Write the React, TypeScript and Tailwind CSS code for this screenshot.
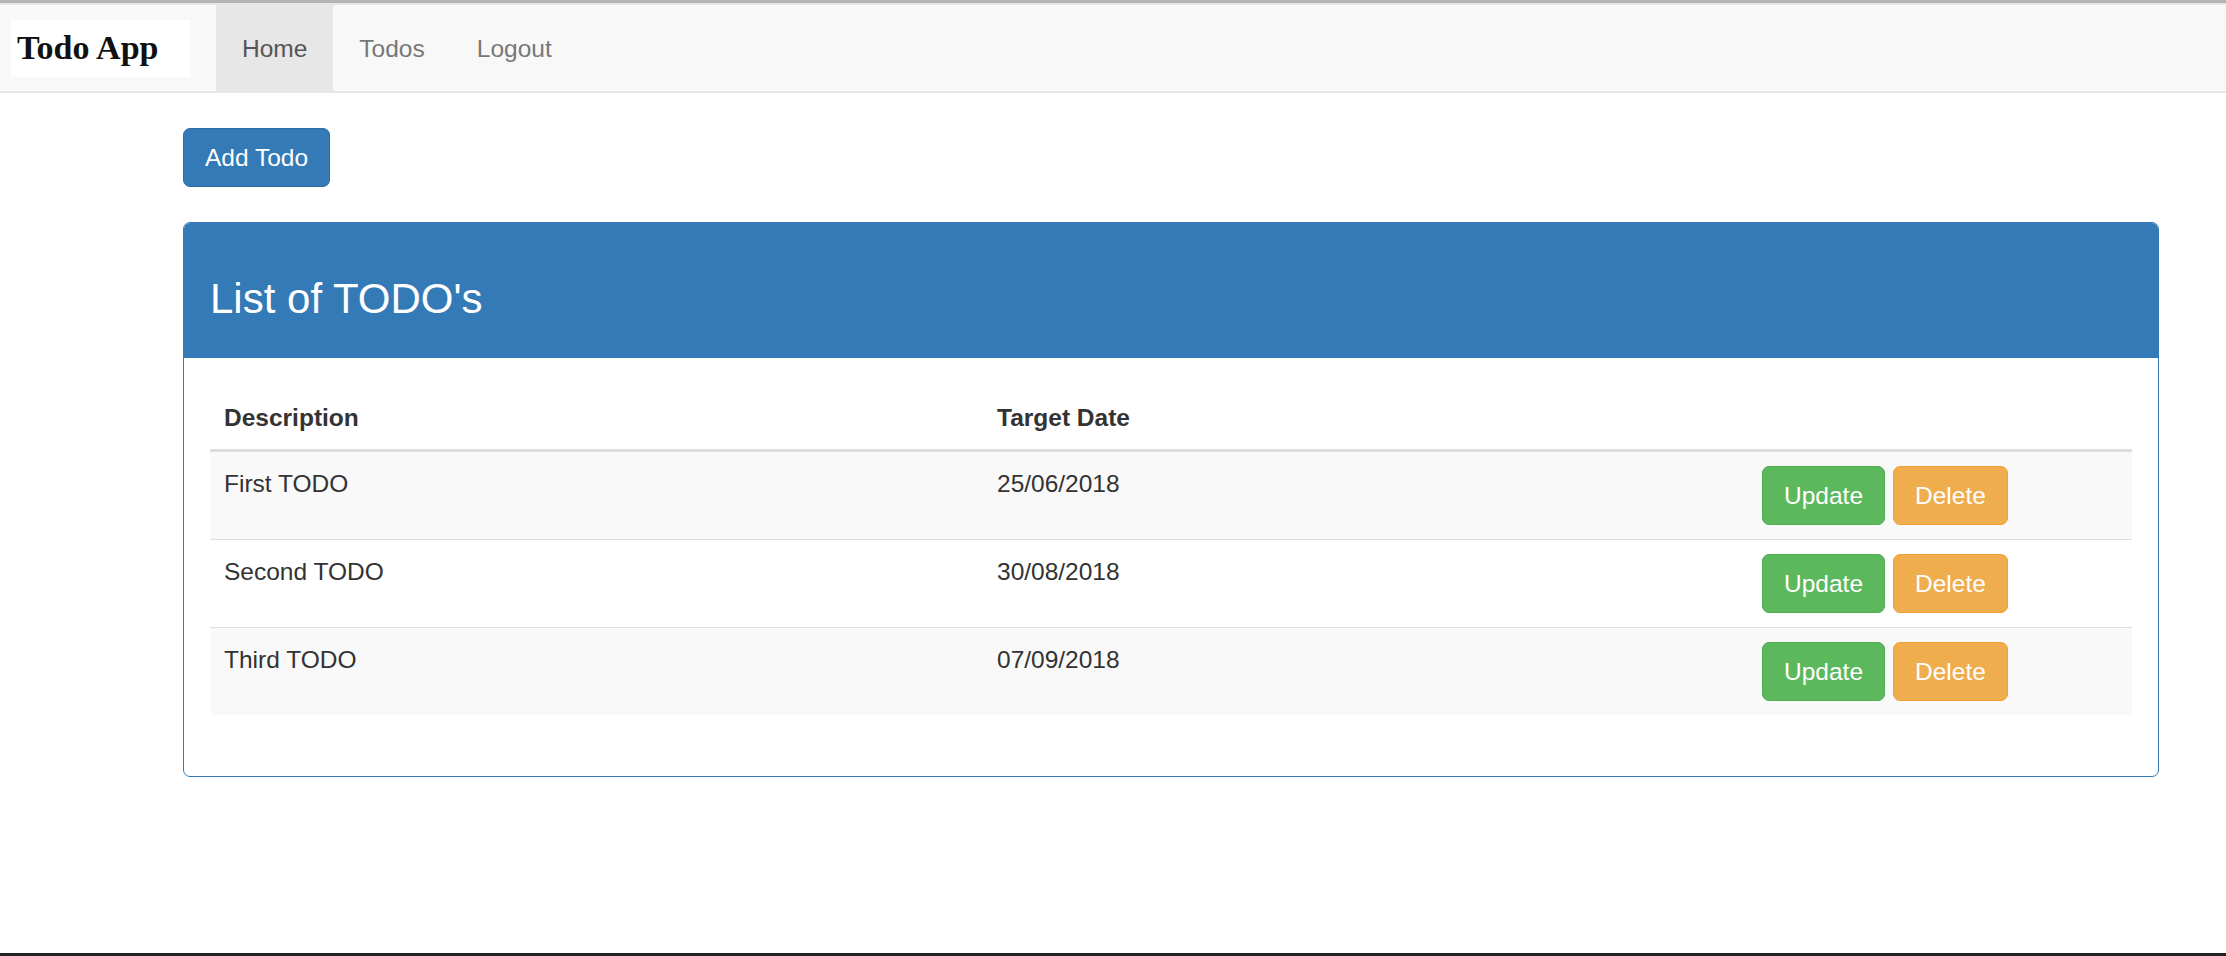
const todos = [
  { id: 1, description: "First TODO", targetDate: "25/06/2018" },
  { id: 2, description: "Second TODO", targetDate: "30/08/2018" },
  { id: 3, description: "Third TODO", targetDate: "07/09/2018" },
]

const sans = "font-['Liberation_Sans',Arial,sans-serif]"

const App = () => {
  return (
    <div className={`relative min-h-[956px] bg-white text-[#333] ${sans} text-[24.5px] leading-[35px]`}>
      <div className="h-[3px] bg-[#b4b4b4]" />

      {/* navbar */}
      <nav className="flex h-[90px] items-stretch border-y-2 border-[#e7e7e7] bg-[#f8f8f8]">
        <div className="ml-[11px] mr-[26px] flex h-[57px] w-[179px] items-center self-center bg-white pl-[6px]">
          <span className="font-['Liberation_Serif','Times_New_Roman',serif] text-[34px] font-bold leading-none text-[#111]">
            Todo App
          </span>
        </div>
        {[
          { label: "Home", active: true },
          { label: "Todos", active: false },
          { label: "Logout", active: false },
        ].map((item) => (
          <a
            key={item.label}
            href="#"
            className={`flex items-center px-[26px] ${item.active ? "bg-[#e7e7e7] text-[#555]" : "text-[#777]"}`}
          >
            {item.label}
          </a>
        ))}
      </nav>

      <div className="ml-[183px] w-[1976px] pt-[35px]">
        <button
          type="button"
          className="h-[59px] rounded-[7px] border-[1.75px] border-[#2e6da4] bg-[#337ab7] px-[21px] text-white"
        >
          Add Todo
        </button>

        <div className="mt-[35px] overflow-hidden rounded-[7px] border-[1.75px] border-[#337ab7]">
          <div className="bg-[#337ab7] px-[26px] pb-[36px] pt-[53px]">
            <h3 className="text-[42px] leading-[46px] text-white">List of TODO's</h3>
          </div>

          <div className="p-[26px] pb-[61px] pt-[28px]">
            <table className="w-full table-fixed border-collapse">
              <colgroup>
                <col className="w-[773px]" />
                <col className="w-[765px]" />
                <col />
              </colgroup>
              <thead>
                <tr className="border-b-[3.5px] border-[#ddd]">
                  <th className="p-[14px] text-left font-bold">Description</th>
                  <th className="p-[14px] text-left font-bold">Target Date</th>
                  <th className="p-[14px]" />
                </tr>
              </thead>
              <tbody>
                {todos.map((todo, i) => (
                  <tr
                    key={todo.id}
                    className={`border-t-[1.75px] border-[#ddd] ${i % 2 === 0 ? "bg-[#f9f9f9]" : "bg-white"}`}
                  >
                    <td className="p-[14px] align-top">{todo.description}</td>
                    <td className="p-[14px] align-top">{todo.targetDate}</td>
                    <td className="p-[14px] align-top">
                      <div className="flex gap-[8px]">
                        <button
                          type="button"
                          className="h-[59px] rounded-[7px] border-[1.75px] border-[#4cae4c] bg-[#5cb85c] px-[21px] text-white"
                        >
                          Update
                        </button>
                        <button
                          type="button"
                          className="h-[59px] rounded-[7px] border-[1.75px] border-[#eea236] bg-[#f0ad4e] px-[21px] text-white"
                        >
                          Delete
                        </button>
                      </div>
                    </td>
                  </tr>
                ))}
              </tbody>
            </table>
          </div>
        </div>
      </div>

      <div className="absolute bottom-0 left-0 right-0 h-[3px] bg-[#222]" />
    </div>
  )
}

export default App
